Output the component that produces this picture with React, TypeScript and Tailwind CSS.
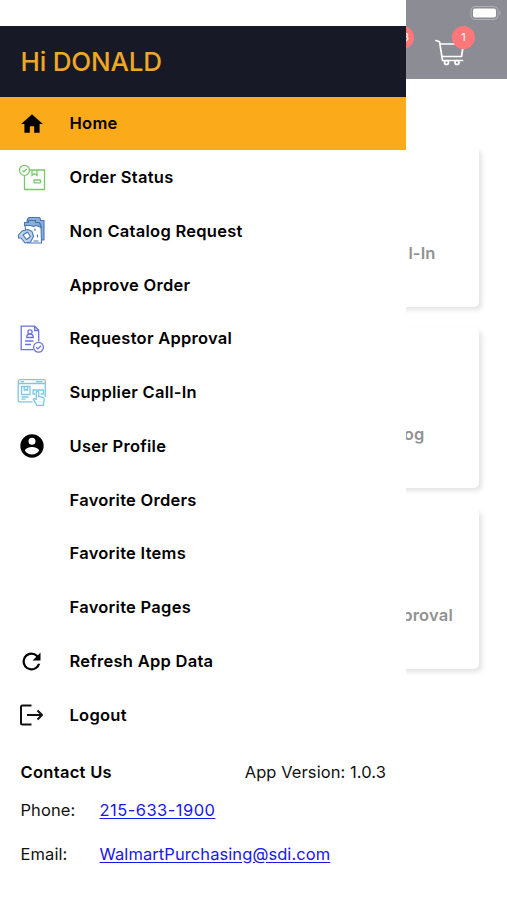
import React from "react";

type Item = { label: string; icon?: React.ReactNode; active?: boolean };

const HomeIcon = () => (
  <svg width="26" height="26" viewBox="0 0 24 24"><path d="M10 20v-6h4v6h5v-8h3L12 3 2 12h3v8z" /></svg>
);

const OrderIcon = () => (
  <svg width="30" height="30" viewBox="0 0 30 30" fill="none" stroke="#79c96b" strokeWidth="1.3">
    <path d="M12.500 7H27.500v19.500H7.500V13" />
    <circle cx="7.500" cy="7.300" r="5" />
    <path d="m5.500 7.500 1.400 1.400L9.800 6M15 7v5.500l2.500-2 2.500 2V7" />
    <rect x="17" y="17" width="6.500" height="2.800" rx=".5" />
  </svg>
);

const CatalogIcon = () => (
  <svg width="30" height="30" viewBox="0 0 30 30" fill="none" stroke="#4676b4" strokeWidth="1.1" strokeLinejoin="round">
    <path d="M10 6q0-4.500 3-4.500h9q1.500 0 1.500 3h3.500v19.500h-4z" fill="#8caed6" />
    <path d="M7.500 6.500h12q4 0 4.500 4l.5 16.500h-14z" fill="#fff" />
    <path d="M7.500 9.500v-3h4v-2h7v2h4l1.500 5-4.500-2-3 1-3-1z" fill="#8caed6" />
    <path d="m5 15 6-1.500 4 2 1.500 5-3 5.500-5.500 1-4-5H1.500v-3z" fill="#bed3eb" />
    <path d="m6 19 4.500-3 3 4.500-4 3z" fill="#fff" />
    <path d="M18 12.500v2.500M20.500 18.500v3M16.500 25h5" />
  </svg>
);

const ApprovalIcon = () => (
  <svg width="30" height="30" viewBox="0 0 30 30" fill="none" stroke="#6873dc" strokeWidth="1.3">
    <path d="M16.500 25.700H4.200V2.200h13.500l4 4V17.500M17.700 2.500v4h4" />
    <circle cx="13" cy="8" r="2.100" />
    <path d="M9.800 13.500v-1q0-2.300 3.200-2.300t3.200 2.300v1zM8 17h8.500M8 20.500h6" />
    <circle cx="21.500" cy="23.300" r="4.900" fill="#fff" />
    <path d="m19.200 23.300 1.600 1.600 3.200-3.200" />
  </svg>
);

const SupplierIcon = () => (
  <svg width="30" height="30" viewBox="0 0 30 30" fill="none" stroke="#7fc6e6" strokeWidth="1.300" strokeLinejoin="round">
    <path d="M15.500 23.800H3q-1.800 0-1.800-1.800V3.500q0-1.800 1.800-1.800h23.500q1.800 0 1.800 1.800V19" />
    <path d="M1.200 5.500h27M3.500 3.600h3.500M19 3.600h6.500" />
    <path d="M4.500 8.500h8.500v8H4.500zM7.200 8.500v4l1.700-1.200 1.700 1.200v-4M4.500 19h7M4.500 21.200h4" />
    <path d="M18.500 16H16v-4h10.500v4h-3" />
    <path d="M19.300 21.500v-7.200q0-1.200 1.200-1.200t1.200 1.200v4.200l4.200.8q1.500.5 1.300 2.200l-.9 5.800h-6.500l-3.500-6q.7-1.500 3 .2z" fill="#fff" />
  </svg>
);

const UserIcon = () => (
  <svg width="28" height="28" viewBox="0 0 24 24"><path d="M12 2a10 10 0 1 0 0 20 10 10 0 0 0 0-20zm0 3a3 3 0 1 1 0 6 3 3 0 0 1 0-6zm0 14.200a7.200 7.200 0 0 1-6-3.220c.03-1.990 4-3.080 6-3.080s5.970 1.090 6 3.080a7.200 7.200 0 0 1-6 3.220z" /></svg>
);

const RefreshIcon = () => (
  <svg width="27" height="27" viewBox="0 0 24 24"><path d="M17.650 6.350A7.960 7.960 0 0 0 12 4a8 8 0 1 0 7.730 10h-2.080A6 6 0 1 1 12 6c1.660 0 3.140.69 4.220 1.780L13 11h7V4z" /></svg>
);

const LogoutIcon = () => (
  <svg width="26" height="24" viewBox="0 0 26 24" fill="none" stroke="#111" strokeWidth="2" strokeLinejoin="round">
    <path d="M12.500 2.500H3.500Q2 2.500 2 4v16q0 1.500 1.500 1.500h9M8 12h15M18.500 7.500l4.500 4.500-4.500 4.500" />
  </svg>
);

const items: Item[] = [
  { label: "Home", icon: <HomeIcon />, active: true },
  { label: "Order Status", icon: <OrderIcon /> },
  { label: "Non Catalog Request", icon: <CatalogIcon /> },
  { label: "Approve Order" },
  { label: "Requestor Approval", icon: <ApprovalIcon /> },
  { label: "Supplier Call-In", icon: <SupplierIcon /> },
  { label: "User Profile", icon: <UserIcon /> },
  { label: "Favorite Orders" },
  { label: "Favorite Items" },
  { label: "Favorite Pages" },
  { label: "Refresh App Data", icon: <RefreshIcon /> },
  { label: "Logout", icon: <LogoutIcon /> },
];

const cards = [
  { label: "Call-In", pad: "pr-[43.500px] tracking-[0.100px]" },
  { label: "Catalog", pad: "pr-[54.500px] tracking-[0.200px]" },
  { label: "Approval", pad: "pr-[26px] tracking-[0.200px]" },
];

export default function App() {
  return (
    <div className="flex h-[900px] w-[507px] overflow-hidden bg-white font-['Inter','Liberation_Sans',sans-serif] text-black">
      <aside className="flex w-[406px] shrink-0 flex-col pt-[25.500px]">
        <header className="flex h-[71px] shrink-0 items-center bg-[#171927] pl-[20.500px] text-[26px] font-medium tracking-[-0.200px] text-[#f0a724]">
          Hi DONALD
        </header>
        <nav>
          {items.map((it) => (
            <div key={it.label} className={`flex h-[53.770px] items-center text-[16.500px] font-semibold tracking-[0.270px] ${it.active ? "bg-[#fbaa19]" : ""}`}>
              <span className="flex w-[63px] shrink-0 justify-center pt-px">{it.icon}</span>
              <span className="pt-[0.500px] pl-[6.500px]">{it.label}</span>
            </div>
          ))}
        </nav>
        <section className="pt-[18px] pl-[20.500px] text-[16.500px] leading-[24px] tracking-[0.080px] text-[#111]">
          <div className="flex justify-between pr-5">
            <h2 className="font-semibold tracking-[0.300px] text-black">Contact Us</h2>
            <span>App Version: 1.0.3</span>
          </div>
          <div className="mt-[14px] flex">
            <span className="w-[79px]">Phone:</span>
            <a className="tracking-[0.460px] text-[#1a16ea] underline underline-offset-2">215-633-1900</a>
          </div>
          <div className="mt-5 flex">
            <span className="w-[79px]">Email:</span>
            <a className="text-[#1a16ea] underline underline-offset-2">WalmartPurchasing@sdi.com</a>
          </div>
        </section>
      </aside>
      <main className="flex w-[101px] flex-col overflow-hidden">
        <div className="relative h-[79px] shrink-0 bg-[#8b8c94]">
          <svg className="absolute top-[5px] left-[64px]" width="32" height="16" viewBox="0 0 32 16">
            <rect x="1" y="1.500" width="27" height="13" rx="4" fill="none" stroke="#b0b0b6" />
            <rect x="3" y="3.500" width="23" height="9" rx="2" fill="#fff" />
            <path d="M29.500 5.500q2 2.500 0 5z" fill="#b8b8bd" />
          </svg>
          <svg className="absolute top-[38px] left-[29px]" width="32" height="28" viewBox="0 0 32 28" fill="none" stroke="#fff" strokeWidth="1.700" strokeLinecap="round" strokeLinejoin="round">
            <path d="M1 2.500l3.500 1.200L7.500 22.500H27.500M5.500 6H28.500l-2 12.500H7.300" />
            <circle cx="11.500" cy="24.500" r="2" /><circle cx="22" cy="24.500" r="2" />
          </svg>
          <span className="absolute top-[25.500px] left-[-15px] flex size-[23px] items-center justify-end rounded-full bg-[#ff7779] pr-[5px] text-[11px] text-white">3</span>
          <span className="absolute top-[25.500px] left-[46px] flex size-[23px] items-center justify-center rounded-full bg-[#ff7779] text-[11px] text-white">1</span>
        </div>
        <div className="flex flex-col gap-[21px] pt-[67.500px]">
          {cards.map((c) => (
            <div key={c.label} className={`-ml-10 flex h-[160px] w-[113px] items-end justify-end whitespace-nowrap rounded-[5px] bg-white pb-[41.500px] text-[16.500px] leading-6 font-semibold text-[#929292] shadow-[3px_3px_5px_0px_rgba(0,0,0,0.11)] ${c.pad}`}>
              {c.label === "Call-In" ? <><span className="mr-[2px]">Cal</span>l-In</> : c.label}
            </div>
          ))}
        </div>
      </main>
    </div>
  );
}
